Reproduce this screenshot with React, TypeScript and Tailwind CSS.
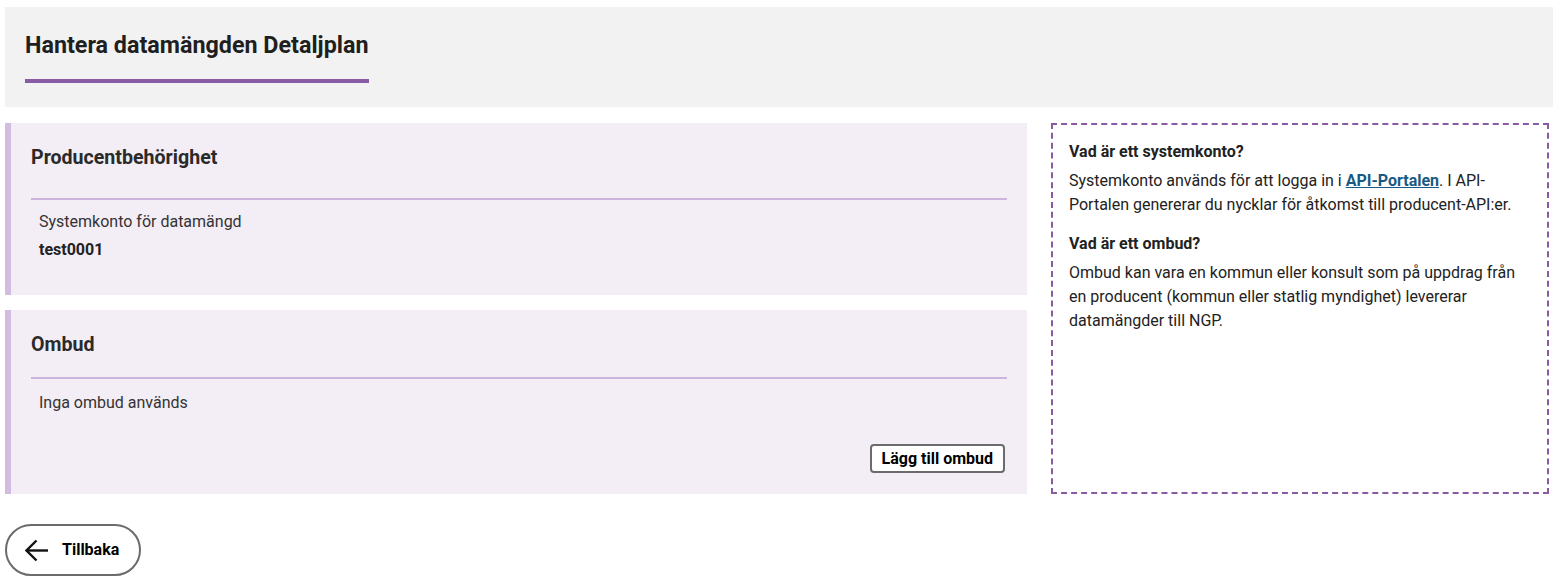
export default function App() {
  return (
    <div className="min-h-[582px] bg-white text-[#222] font-['Roboto',sans-serif] pt-[7px] pl-[5px]">
      <div className="w-[1548px] h-[100px] bg-[#f2f2f2] pl-5 pt-[24px]">
        <h1 className="inline-block text-[23.3px] font-bold leading-[28px] text-[#1f1f1f] border-b-4 border-[#8a5ba5] pb-[20px] pr-[1px]">
          Hantera datamängden Detaljplan
        </h1>
      </div>

      <div className="flex gap-6 mt-4">
        <div className="w-[1022px] flex flex-col gap-[15px]">
          <section className="h-[172px] bg-[#f3edf5] border-l-[6px] border-[#d2bde0] pl-5 pr-5 pt-[23px]">
            <h2 className="text-[19.6px] font-bold leading-6 text-[#2a2a2a]">Producentbehörighet</h2>
            <div className="h-[2px] bg-[#ccb5dc] mt-[28px]" />
            <div className="pl-2 pt-[10px] text-[16px] leading-6 text-[#333]">
              <div>Systemkonto för datamängd</div>
              <div className="font-bold mt-1 text-[#222]">test0001</div>
            </div>
          </section>

          <section className="h-[184px] bg-[#f3edf5] border-l-[6px] border-[#d2bde0] pl-5 pr-5 pt-[23px] flex flex-col">
            <h2 className="text-[19.6px] font-bold leading-6 text-[#2a2a2a]">Ombud</h2>
            <div className="h-[2px] bg-[#ccb5dc] mt-[20px]" />
            <div className="pl-2 pt-[12px] text-[16px] leading-6 text-[#333]">Inga ombud används</div>
            <div className="flex justify-end mt-[29px] pr-[2px]">
              <button className="h-[29px] px-[10px] bg-white border-2 border-[#6b6b6b] rounded-[4px] text-[16px] font-bold text-black leading-none">
                Lägg till ombud
              </button>
            </div>
          </section>
        </div>

        <aside className="w-[498px] h-[371px] border-2 border-dashed border-[#8a5ba5] pl-4 pr-4 pt-[15px] text-[16px] leading-6 text-[#222]">
          <h3 className="font-bold">Vad är ett systemkonto?</h3>
          <p className="mt-[5px]">
            Systemkonto används för att logga in i{" "}
            <a className="font-bold text-[#1a5a82] underline">API-Portalen</a>. I API-Portalen genererar du nycklar för åtkomst till producent-API:er.
          </p>
          <h3 className="font-bold mt-[15px]">Vad är ett ombud?</h3>
          <p className="mt-[5px]">
            Ombud kan vara en kommun eller konsult som på uppdrag från en producent (kommun eller statlig myndighet) levererar datamängder till NGP.
          </p>
        </aside>
      </div>

      <button className="mt-[30px] h-[52px] w-[136px] flex items-center gap-[14px] pl-[18px] border-2 border-[#6b6b6b] rounded-full bg-white text-[16px] font-bold text-black">
        <svg width="23" height="23" viewBox="0 0 23 23" fill="none" stroke="#111" strokeWidth="2.4">
          <path d="M1.5 11.5H23" />
          <path d="M11.5 1.5L1.5 11.5L11.5 21.5" />
        </svg>
        Tillbaka
      </button>
    </div>
  );
}
